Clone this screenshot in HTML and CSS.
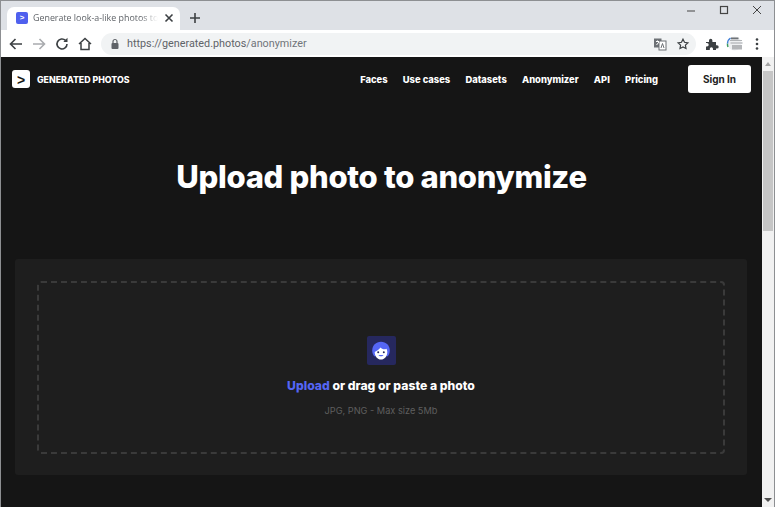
FILE: index.html
```html
<!DOCTYPE html>
<html lang="en">
<head>
<meta charset="utf-8">
<title>Generate look-a-like photos</title>
<link rel="stylesheet" href="styles.css">
</head>
<body>
<div class="window">
  <div class="tabstrip">
    <div class="tab">
      <span class="favicon">&gt;</span>
      <span class="tab-title">Generate look-a-like photos to</span>
      <svg class="tab-close" width="10" height="10" viewBox="0 0 10 10"><path d="M1.500 1.500l7 7M8.500 1.500l-7 7" stroke="#3c4043" stroke-width="1.600"/></svg>
    </div>
    <svg class="new-tab" width="12" height="12" viewBox="0 0 12 12"><path d="M6 1v10M1 6h10" stroke="#3c4043" stroke-width="1.600"/></svg>
    <div class="win-controls">
      <svg width="10" height="10" viewBox="0 0 10 10"><path d="M1 6h8" stroke="#444" stroke-width="1"/></svg>
      <svg width="10" height="10" viewBox="0 0 10 10"><rect x="1.500" y="1.500" width="7" height="7" fill="none" stroke="#444" stroke-width="1.200"/></svg>
      <svg width="10" height="10" viewBox="0 0 10 10"><path d="M1 1l8 8M9 1l-8 8" stroke="#444" stroke-width="1"/></svg>
    </div>
  </div>
  <div class="toolbar">
    <svg class="tool" width="16" height="16" viewBox="0 0 16 16"><path d="M14 8H3M7.500 3L2.500 8l5 5" fill="none" stroke="#3c4043" stroke-width="1.600"/></svg>
    <svg class="tool" width="16" height="16" viewBox="0 0 16 16"><path d="M2 8h11M8.500 3l5 5-5 5" fill="none" stroke="#a9abae" stroke-width="1.600"/></svg>
    <svg class="tool" width="16" height="16" viewBox="0 0 16 16"><path d="M13 8a5 5 0 1 1-1.500-3.600" fill="none" stroke="#3c4043" stroke-width="1.600"/><path d="M13.500 1.800v4.200H9.300z" fill="#3c4043"/></svg>
    <svg class="tool" width="16" height="16" viewBox="0 0 16 16"><path d="M2 8l6-5.500L14 8M4 7v6.500h8V7" fill="none" stroke="#3c4043" stroke-width="1.500"/></svg>
    <div class="omnibox">
      <svg width="10" height="12" viewBox="0 0 10 12"><path d="M3 5V3.500a2 2 0 0 1 4 0V5" fill="none" stroke="#5f6368" stroke-width="1.200"/><rect x="1.500" y="5" width="7" height="6" rx="1" fill="#5f6368"/></svg>
      <span class="url"><span class="url-host">https://generated.photos</span>/anonymizer</span>
      <span class="omni-end">
        <svg width="14" height="14" viewBox="0 0 14 14"><rect x="1" y="1.500" width="7.500" height="9" fill="#6d7175"/><rect x="6" y="4" width="7" height="9" fill="#fff" stroke="#6d7175"/><path d="M3 4.500h3M4.500 3.500v1M3.500 8l2.500-3" stroke="#fff" fill="none"/><path d="M8 11l1.500-4.500L11 11" stroke="#6d7175" fill="none"/></svg>
        <svg width="14" height="14" viewBox="0 0 14 14"><path d="M7 2.200l1.500 3.100 3.400.5-2.500 2.300.6 3.400L7 10l-3 1.500.6-3.400-2.500-2.300 3.400-.5z" fill="none" stroke="#3c4043" stroke-width="1.200"/></svg>
      </span>
    </div>
    <svg class="puzzle" width="14" height="14" viewBox="0 0 14 14"><path d="M1 5h3V3.500a1.700 1.700 0 0 1 3.400 0V5H11v3.200h1a1.700 1.700 0 0 1 0 3.400h-1V13H8v-1.200a1.600 1.600 0 0 0-3.200 0V13H1V9.500h1a1.700 1.700 0 0 0 0-3.400H1z" fill="#3c4043"/></svg>
    <svg class="avatar" width="17" height="15" viewBox="0 0 17 15">
      <circle cx="8.500" cy="7.500" r="7" fill="#eef0f2"/>
      <path d="M2 11a7 7 0 0 1-.5-3.500" fill="none" stroke="#3b9b5c" stroke-width="1.400"/>
      <path d="M1.500 7.500A7 7 0 0 1 4.500 2" fill="none" stroke="#3f7fd8" stroke-width="1.400"/>
      <path d="M5 1.500h7.500v1.800H5z" fill="#6f7377"/>
      <path d="M4 4.500h12" stroke="#b0b3b6"/>
      <rect x="4.500" y="6" width="12" height="2" fill="#c9cbce"/>
      <rect x="6" y="9" width="10" height="4.500" fill="#b4b6b9"/>
    </svg>
    <svg class="menu" width="4" height="14" viewBox="0 0 4 14"><circle cx="2" cy="2.500" r="1.300" fill="#3c4043"/><circle cx="2" cy="7" r="1.300" fill="#3c4043"/><circle cx="2" cy="11.500" r="1.300" fill="#3c4043"/></svg>
  </div>
  <div class="viewport">
    <div class="page">
      <header class="site-header">
        <div class="brand">
          <span class="brand-mark">&gt;</span>
          <span class="brand-name">GENERATED PHOTOS</span>
        </div>
        <nav class="nav">
          <a>Faces</a><a>Use cases</a><a>Datasets</a><a>Anonymizer</a><a>API</a><a>Pricing</a>
        </nav>
        <button class="signin">Sign In</button>
      </header>
      <h1 class="headline">Upload photo to anonymize</h1>
      <section class="panel">
        <div class="dropzone">
          <div class="face-tile">
            <svg width="20" height="20" viewBox="0 0 20 20">
              <path d="M10 .8c-5 0-8.800 3.800-8.800 8.700 0 2.300.8 4.300 2 5.800h13.600c1.200-1.500 2-3.500 2-5.800C18.800 4.600 15 .8 10 .8z" fill="#5566f5"/>
              <path d="M3.700 11c0 4.300 2.800 7.600 6.300 7.600s6.300-3.300 6.300-7.600c0-1.300-.3-2.400-.8-3.300-1.700 1-4.500.8-6-1.200C8.300 8.300 6 9.800 3.700 11z" fill="#fff"/>
              <circle cx="7.200" cy="11.300" r="1" fill="#26285e"/>
              <circle cx="12.800" cy="11.300" r="1" fill="#26285e"/>
              <path d="M7.400 14c1.300 1.700 3.900 1.700 5.200 0z" fill="#5566f5"/>
            </svg>
          </div>
          <p class="drop-title"><span class="accent">Upload</span> or drag or paste a photo</p>
          <p class="drop-note">JPG, PNG - Max size 5Mb</p>
        </div>
      </section>
    </div>
    <div class="scrollbar">
      <span class="arrow-up"></span>
      <span class="thumb"></span>
      <span class="arrow-down"></span>
    </div>
  </div>
</div>
</body>
</html>
```

FILE: styles.css
```css
* { box-sizing: border-box; }
html, body { margin: 0; height: 100%; overflow: hidden; }
body { font-family: Inter, "Liberation Sans", sans-serif; background: #fff; }
p, h1 { margin: 0; }

.window {
  width: 775px;
  height: 507px;
  display: flex;
  flex-direction: column;
  border: 1px solid #8d8f92;
  border-bottom: 0;
}

.tabstrip {
  height: 29px;
  flex: none;
  background: #dee1e6;
  display: flex;
  align-items: flex-end;
  padding-left: 6px;
}
.tab {
  width: 173px;
  height: 23px;
  background: #fff;
  border-radius: 7px 7px 0 0;
  display: flex;
  align-items: center;
  padding: 0 8px 1px 9px;
}
.favicon {
  width: 12px;
  height: 12px;
  flex: none;
  background: #4f60ee;
  border-radius: 2px;
  color: #fff;
  font: 700 8px/12px "Liberation Sans", sans-serif;
  text-align: center;
}
.tab-title {
  width: 125px;
  margin-left: 5px;
  flex: none;
  font: 8.900px/16px "Open Sans", "Liberation Sans", sans-serif;
  white-space: nowrap;
  color: #5f6368;
  -webkit-mask-image: linear-gradient(to right, #000 86%, transparent);
  mask-image: linear-gradient(to right, #000 86%, transparent);
}
.tab-close { margin-left: 6px; flex: none; }
.new-tab { margin: 0 0 6px 9px; }
.win-controls {
  margin-left: auto;
  align-self: flex-start;
  display: flex;
  gap: 23px;
  padding: 4px 12px 0 0;
}

.toolbar {
  height: 27px;
  flex: none;
  background: #fff;
  display: flex;
  align-items: center;
  padding-left: 7px;
}
.tool { flex: none; margin-right: 7px; }
.omnibox {
  width: 595px;
  height: 22px;
  margin-left: 1px;
  padding: 0 6px 0 9px;
  background: #f1f3f4;
  border-radius: 11px;
  display: flex;
  align-items: center;
  flex: none;
}
.url {
  margin-left: 7px;
  font: 10.800px/16px Roboto, "Liberation Sans", sans-serif;
  color: #70757a;
  white-space: nowrap;
}
.url-host { color: #5f6368; }
.omni-end { margin-left: auto; display: flex; gap: 9px; align-items: center; }
.puzzle { margin-left: 9px; flex: none; }
.avatar { margin-left: 7px; flex: none; }
.menu { margin-left: 12px; flex: none; }

.viewport {
  flex: 1;
  min-height: 0;
  display: flex;
  background: #151515;
}
.page { flex: 1; min-width: 0; overflow: hidden; padding: 0 14px; }

.site-header {
  height: 44px;
  display: flex;
  align-items: center;
}
.brand { display: flex; align-items: center; margin-left: -3px; }
.brand-mark {
  width: 18px;
  height: 18px;
  border-radius: 3px;
  background: #fff;
  color: #151515;
  font: 700 14px/20px "Liberation Sans", sans-serif;
  text-align: center;
}
.brand-name {
  margin-left: 7px;
  font-size: 8.800px;
  font-weight: 800;
  color: #fff;
  white-space: nowrap;
}
.nav {
  margin-left: auto;
  display: flex;
  gap: 15.200px;
}
.nav a {
  font-size: 9.400px;
  font-weight: 800;
  color: #fff;
  white-space: nowrap;
}
.signin {
  width: 63px;
  height: 28px;
  margin-left: 30px;
  margin-right: -3px;
  border: 0;
  border-radius: 3px;
  background: #fff;
  color: #222;
  font: 700 10px Inter, sans-serif;
}

.headline {
  margin-top: 54px;
  font-size: 31px;
  line-height: 44px;
  font-weight: 800;
  letter-spacing: -.3px;
  text-align: center;
  color: #fff;
}

.panel {
  height: 216px;
  margin-top: 60px;
  padding: 22px;
  background: #1e1e1e;
  border-radius: 3px;
  width: 732px;
}
.dropzone {
  height: 173px;
  border: 2px dashed #3a3a3a;
  border-radius: 4px;
  display: flex;
  flex-direction: column;
  align-items: center;
  padding-top: 53px;
}
.face-tile {
  width: 29px;
  height: 29px;
  background: #26285e;
  border-radius: 2px;
  display: flex;
  align-items: center;
  justify-content: center;
}
.drop-title {
  margin-top: 13px;
  font-size: 12.200px;
  line-height: 16px;
  font-weight: 800;
  color: #fff;
}
.accent { color: #5566f5; }
.drop-note {
  margin-top: 10px;
  font-size: 9.200px;
  line-height: 14px;
  color: #5f5f5f;
}

.scrollbar {
  width: 12px;
  flex: none;
  background: #f1f1f1;
  display: flex;
  flex-direction: column;
  align-items: center;
}
.thumb { width: 10px; height: 160px; margin-top: 5px; background: #c6c6c6; }
.arrow-up {
  margin-top: 5px;
  border: 3px solid transparent;
  border-top: 0;
  border-bottom: 4px solid #a3a3a3;
}
.arrow-down {
  margin-top: auto;
  margin-bottom: 5px;
  border: 4px solid transparent;
  border-bottom: 0;
  border-top: 4px solid #505050;
}
```
